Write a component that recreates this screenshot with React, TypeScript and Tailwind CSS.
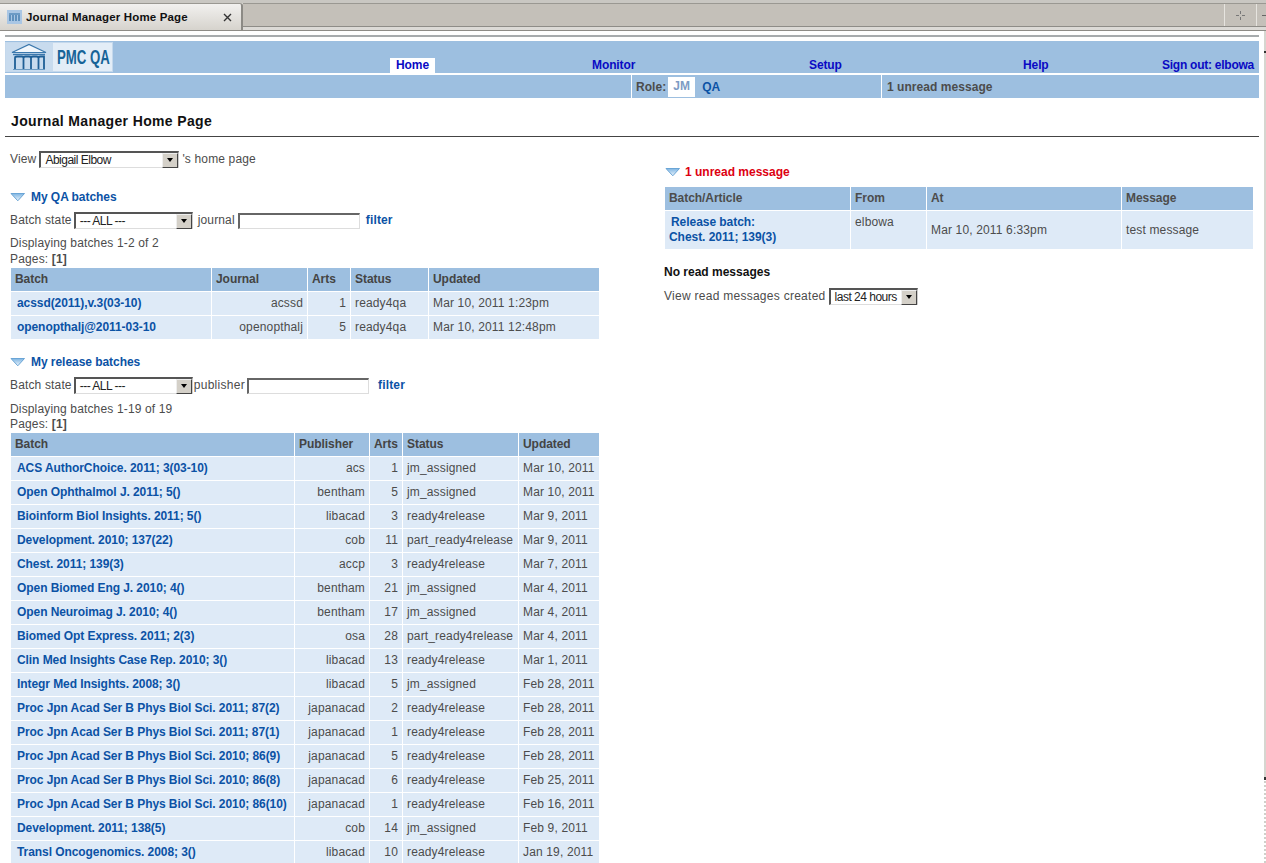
const qa = [
  ["acssd(2011),v.3(03-10)", "acssd", "1", "ready4qa", "Mar 10, 2011 1:23pm"],
  ["openopthalj@2011-03-10", "openopthalj", "5", "ready4qa", "Mar 10, 2011 12:48pm"],
];
const rel = [
  ["ACS AuthorChoice. 2011; 3(03-10)", "acs", "1", "jm_assigned", "Mar 10, 2011"],
  ["Open Ophthalmol J. 2011; 5()", "bentham", "5", "jm_assigned", "Mar 10, 2011"],
  ["Bioinform Biol Insights. 2011; 5()", "libacad", "3", "ready4release", "Mar 9, 2011"],
  ["Development. 2010; 137(22)", "cob", "11", "part_ready4release", "Mar 9, 2011"],
  ["Chest. 2011; 139(3)", "accp", "3", "ready4release", "Mar 7, 2011"],
  ["Open Biomed Eng J. 2010; 4()", "bentham", "21", "jm_assigned", "Mar 4, 2011"],
  ["Open Neuroimag J. 2010; 4()", "bentham", "17", "jm_assigned", "Mar 4, 2011"],
  ["Biomed Opt Express. 2011; 2(3)", "osa", "28", "part_ready4release", "Mar 4, 2011"],
  ["Clin Med Insights Case Rep. 2010; 3()", "libacad", "13", "ready4release", "Mar 1, 2011"],
  ["Integr Med Insights. 2008; 3()", "libacad", "5", "jm_assigned", "Feb 28, 2011"],
  ["Proc Jpn Acad Ser B Phys Biol Sci. 2011; 87(2)", "japanacad", "2", "ready4release", "Feb 28, 2011"],
  ["Proc Jpn Acad Ser B Phys Biol Sci. 2011; 87(1)", "japanacad", "1", "ready4release", "Feb 28, 2011"],
  ["Proc Jpn Acad Ser B Phys Biol Sci. 2010; 86(9)", "japanacad", "5", "ready4release", "Feb 28, 2011"],
  ["Proc Jpn Acad Ser B Phys Biol Sci. 2010; 86(8)", "japanacad", "6", "ready4release", "Feb 25, 2011"],
  ["Proc Jpn Acad Ser B Phys Biol Sci. 2010; 86(10)", "japanacad", "1", "ready4release", "Feb 16, 2011"],
  ["Development. 2011; 138(5)", "cob", "14", "jm_assigned", "Feb 9, 2011"],
  ["Transl Oncogenomics. 2008; 3()", "libacad", "10", "ready4release", "Jan 19, 2011"],
];

function Tri() {
  return (
    <svg width="16" height="10" viewBox="0 0 16 10" className="shrink-0">
      <defs>
        <linearGradient id="tg" x1="0" y1="0" x2="0" y2="1">
          <stop offset="0" stopColor="#7db4e2" />
          <stop offset="1" stopColor="#eef6fc" />
        </linearGradient>
      </defs>
      <path d="M1 1.5 H14.5 L7.8 8.8 Z" fill="url(#tg)" stroke="#6aa5d6" strokeWidth="1" />
    </svg>
  );
}

function Select({ text, w }: { text: string; w: string }) {
  return (
    <div className={`${w} h-[17px] flex items-center bg-white border-t-2 border-l-2 border-r border-b border-t-[#555] border-l-[#555] border-r-[#ccc] border-b-[#ddd] text-[12px] tracking-[-0.5px] text-[#222]`}>
      <span className="flex-1 pl-[4px] whitespace-nowrap overflow-hidden">{text}</span>
      <div className="w-[16px] h-[15px] bg-[#d4d0c8] border border-t-[#eee] border-l-[#eee] border-r-[#444] border-b-[#444] flex items-center justify-center">
        <div className="w-0 h-0 border-l-[3px] border-r-[3px] border-t-[4px] border-l-transparent border-r-transparent border-t-black" />
      </div>
    </div>
  );
}

function Field({ w }: { w: string }) {
  return <div className={`${w} h-[16px] bg-white border-t-2 border-l-2 border-r border-b border-t-[#666] border-l-[#666] border-r-[#ddd] border-b-[#ddd]`} />;
}

function DataTable({ heads, widths, rows }: { heads: string[]; widths: string[]; rows: string[][] }) {
  return (
    <table className="table-fixed border-separate border-spacing-0 w-[588px] ml-[11px]">
      <thead>
        <tr className="h-[24px]">
          {heads.map((h, i) => (
            <th key={h} className={`${widths[i]} bg-[#9dbfe0] text-left font-bold tracking-[-0.05px] text-[#444] pl-[4px] border-r border-b border-white last:border-r-0 p-0`}>{h}</th>
          ))}
        </tr>
      </thead>
      <tbody>
        {rows.map((r) => (
          <tr key={r[0]} className="h-[24px]">
            <td className="bg-[#deeaf7] font-bold tracking-[-0.07px] text-[#0b52a5] pl-[6px] border-r border-b border-white p-0 whitespace-nowrap overflow-hidden">{r[0]}</td>
            <td className="bg-[#deeaf7] text-right pr-[4px] border-r border-b border-white p-0">{r[1]}</td>
            <td className="bg-[#deeaf7] text-right pr-[4px] border-r border-b border-white p-0">{r[2]}</td>
            <td className="bg-[#deeaf7] pl-[4px] border-r border-b border-white p-0 whitespace-nowrap">{r[3]}</td>
            <td className="bg-[#deeaf7] pl-[4px] border-b border-white p-0 whitespace-nowrap">{r[4]}</td>
          </tr>
        ))}
      </tbody>
    </table>
  );
}

function Temple() {
  return (
    <svg width="36" height="28" viewBox="0 0 36 28">
      <path d="M1 9.5 L18 1.5 L35 9.5 Z" fill="#f2f7fc" stroke="#3b78ad" strokeWidth="1.2" />
      <path d="M2 11.5 H34" stroke="#3b78ad" strokeWidth="1.4" />
      <path d="M4 26 V15 Q4 13.5 6 13.5 H11 Q12.5 13.5 12.5 15 V26 M12.5 15 Q12.5 13.5 14.5 13.5 H18 Q20 13.5 20 15 V26 M20 15 Q20 13.5 22 13.5 H25.5 Q27.5 13.5 27.5 15 V26 M27.5 15 Q27.5 13.5 29.5 13.5 H33 V26" fill="none" stroke="#1f5f96" strokeWidth="1.8" />
      <path d="M2 26.5 H34" stroke="#6d9cc4" strokeWidth="1" />
    </svg>
  );
}

export default function App() {
  return (
    <div className="w-[1266px] h-[863px] overflow-hidden bg-white text-[12px] leading-[15px] tracking-[0.15px] text-[#4c4c4c] font-['Liberation_Sans',Arial,sans-serif] flex flex-col">
      {/* Browser tab strip */}
      <div className="h-[31px] shrink-0 flex bg-[#dcdad6] border-t-[3px] border-t-[#c9c7c2] border-b border-b-[#8e8c87]">
        <div className="w-[243px] h-[27px] border-t border-t-[#9a9892] bg-gradient-to-b from-[#f2f1ef] to-[#d6d3cd] rounded-tr-[3px] border-r-2 border-r-[#8c8a85] flex items-center pl-[7px] pr-[9px]">
          <div className="w-[15px] h-[14px] bg-[#a9c6e4] flex items-center justify-center mr-[4px] shrink-0">
            <svg width="13" height="10" viewBox="0 0 13 10"><path d="M1 2 H12 M2 3 V9 M5 3 V9 M8 3 V9 M11 3 V9" stroke="#2f6ea5" strokeWidth="1.2" /></svg>
          </div>
          <span className="flex-1 font-bold text-[11.5px] tracking-[0.16px] text-[#111] whitespace-nowrap">Journal Manager Home Page</span>
          <svg width="9" height="9" viewBox="0 0 9 9"><path d="M1 1 L8 8 M8 1 L1 8" stroke="#333" strokeWidth="1.4" /></svg>
        </div>
        <div className="flex-1 h-[24px] flex justify-end bg-[#c4c0b9] border-t border-t-[#9a9892] border-b border-b-[#8e8c87]">
          <div className="w-[31px] border-l border-[#e6e4df] flex items-center justify-center">
            <svg width="9" height="9" viewBox="0 0 9 9"><path d="M4.5 0 V3 M4.5 6 V9 M0 4.5 H3 M6 4.5 H9" stroke="#777" /></svg>
          </div>
          <div className="w-[10px] ml-[1px] border-l border-[#e6e4df] flex items-center pl-[5px]">
            <div className="w-[4px] h-px bg-[#666]" />
          </div>
        </div>
      </div>

      <div className="flex flex-1 min-h-0">
        <div className="w-[1264px] pl-[5px] pr-[5px]">
          <div className="h-[6px] mt-[4px] border-t-2 border-t-[#a7abad]" />
          {/* Header */}
          <div className="h-[32px] bg-[#9dbfe0] flex items-end">
            <div className="w-[108px] h-[30px] self-start mt-px bg-[#e3edf7] border border-[#c4d8ec] flex items-center overflow-hidden">
              <div className="w-[47px] h-full bg-[#c8dbee] flex items-center justify-center pr-[2px]"><Temple /></div>
              <span className="ml-[4px] w-[54px] text-[21px] leading-[28px] tracking-normal font-bold text-[#176397] whitespace-nowrap scale-x-[.63] origin-left">PMC QA</span>
            </div>
            <div className="flex items-end font-bold text-[#0a0ac4] leading-[15px] tracking-[-0.1px]">
              <span className="ml-[277px] w-[45px] h-[15px] bg-white text-center">Home</span>
              <span className="ml-[157px] w-[217px]">Monitor</span>
              <span className="w-[214px]">Setup</span>
              <span className="w-[139px]">Help</span>
              <span className="whitespace-nowrap tracking-[-0.25px]">Sign out: elbowa</span>
            </div>
          </div>
          <div className="h-[2px]" />
          {/* Sub bar */}
          <div className="h-[23px] bg-[#9dbfe0] flex font-bold pt-px">
            <div className="w-[627px] border-r border-white -mt-px" />
            <div className="w-[250px] border-r border-white -mt-px flex items-center pl-[4px] tracking-[0.05px]">
              <span className="pt-px">Role:</span>
              <span className="ml-[2px] w-[27px] h-[20px] bg-white text-[#7d9cc4] flex items-center justify-center">JM</span>
              <span className="ml-[7px] text-[#0b52a5] tracking-[-0.1px] pt-px">QA</span>
            </div>
            <div className="flex-1 flex items-center pl-[5px] tracking-[0.05px]">1 unread message</div>
          </div>

          {/* Title */}
          <div className="h-[39px] border-b border-[#444] pl-[6px] pt-[15px] text-[#111] font-bold text-[14px] tracking-[0.36px] leading-[17px]">Journal Manager Home Page</div>

          <div className="flex">
            {/* Left column */}
            <div className="w-[600px] shrink-0 -ml-[5px]">
              <div className="flex items-center gap-[3px] pl-[10px] mt-[14px] h-[17px]">
                <span>View</span>
                <Select text="Abigail Elbow" w="w-[140px]" />
                <span>'s home page</span>
              </div>

              <div className="flex items-center pl-[10px] mt-[21px] h-[16px] font-bold text-[#0b52a5] tracking-[-0.05px]">
                <Tri /><span className="ml-[5px]">My QA batches</span>
              </div>
              <div className="flex items-center pl-[10px] mt-[7px] h-[17px]">
                <span>Batch state</span>
                <Select text="--- ALL ---" w="w-[119px] ml-[2px]" />
                <span className="ml-[5px]">journal</span>
                <span className="ml-[3px]"><Field w="w-[122px]" /></span>
                <span className="ml-[6px] font-bold text-[#0b52a5]">filter</span>
              </div>
              <div className="pl-[10px] mt-[7px]">Displaying batches 1-2 of 2</div>
              <div className="pl-[10px] mt-px">Pages: <b>[1]</b></div>
              <div className="mt-px">
                <DataTable
                  heads={["Batch", "Journal", "Arts", "Status", "Updated"]}
                  widths={["w-[201px]", "w-[96px]", "w-[43px]", "w-[78px]", "w-[170px]"]}
                  rows={qa}
                />
              </div>

              <div className="flex items-center pl-[10px] mt-[14px] h-[16px] font-bold text-[#0b52a5] tracking-[-0.05px]">
                <Tri /><span className="ml-[5px]">My release batches</span>
              </div>
              <div className="flex items-center pl-[10px] mt-[7px] h-[17px]">
                <span>Batch state</span>
                <Select text="--- ALL ---" w="w-[119px] ml-[2px]" />
                <span className="ml-[1px] tracking-[0.3px]">publisher</span>
                <span className="ml-[2px]"><Field w="w-[122px]" /></span>
                <span className="ml-[9px] font-bold text-[#0b52a5]">filter</span>
              </div>
              <div className="pl-[10px] mt-[8px]">Displaying batches 1-19 of 19</div>
              <div className="pl-[10px]">Pages: <b>[1]</b></div>
              <div className="mt-px">
                <DataTable
                  heads={["Batch", "Publisher", "Arts", "Status", "Updated"]}
                  widths={["w-[284px]", "w-[75px]", "w-[33px]", "w-[116px]", "w-[80px]"]}
                  rows={rel}
                />
              </div>
            </div>

            {/* Right column */}
            <div className="ml-[65px] w-[588px] pt-[27px]">
              <div className="flex items-center h-[16px] font-bold text-[#dd0011] tracking-normal">
                <Tri /><span className="ml-[4px]">1 unread message</span>
              </div>
              <table className="table-fixed border-separate border-spacing-0 w-[588px] mt-[7px]">
                <thead>
                  <tr className="h-[24px]">
                    <th className="w-[186px] bg-[#9dbfe0] text-left pl-[4px] border-r border-b border-white p-0 font-bold tracking-[-0.05px]">Batch/Article</th>
                    <th className="w-[76px] bg-[#9dbfe0] text-left pl-[4px] border-r border-b border-white p-0 font-bold tracking-[-0.05px]">From</th>
                    <th className="w-[195px] bg-[#9dbfe0] text-left pl-[4px] border-r border-b border-white p-0 font-bold tracking-[-0.05px]">At</th>
                    <th className="bg-[#9dbfe0] text-left pl-[4px] border-b border-white p-0 font-bold tracking-[-0.05px]">Message</th>
                  </tr>
                </thead>
                <tbody>
                  <tr className="h-[38px]">
                    <td className="bg-[#deeaf7] border-r border-white pl-[4px] p-0 font-bold tracking-[-0.05px] text-[#0b52a5]"><span className="pl-[2px]">Release batch:</span><br />Chest. 2011; 139(3)</td>
                    <td className="bg-[#deeaf7] border-r border-white pl-[4px] pt-[4px] p-0 align-top">elbowa</td>
                    <td className="bg-[#deeaf7] border-r border-white pl-[4px] p-0">Mar 10, 2011 6:33pm</td>
                    <td className="bg-[#deeaf7] pl-[4px] p-0">test message</td>
                  </tr>
                </tbody>
              </table>
              <div className="mt-[16px] -ml-px font-bold text-[#111] tracking-normal">No read messages</div>
              <div className="flex items-center mt-[8px] -ml-px h-[17px]">
                <span className="tracking-[0.27px]">View read messages created</span>
                <Select text="last 24 hours" w="w-[89px] ml-[3px]" />
              </div>
            </div>
          </div>
        </div>

        {/* Scrollbar edge */}
        <div className="w-[2px] flex flex-col">
          <div className="h-[20px] bg-[#d6d6d0]" />
          <div className="h-[2px] bg-[#333]" />
          <div className="h-[724px] bg-[#d6d6d0]" />
          <div className="h-[3px] bg-[#333]" />
          <div className="flex-1 bg-[repeating-linear-gradient(0deg,#d0d0ca_0,#d0d0ca_2px,#ffffff_2px,#ffffff_4px)]" />
        </div>
      </div>
    </div>
  );
}
